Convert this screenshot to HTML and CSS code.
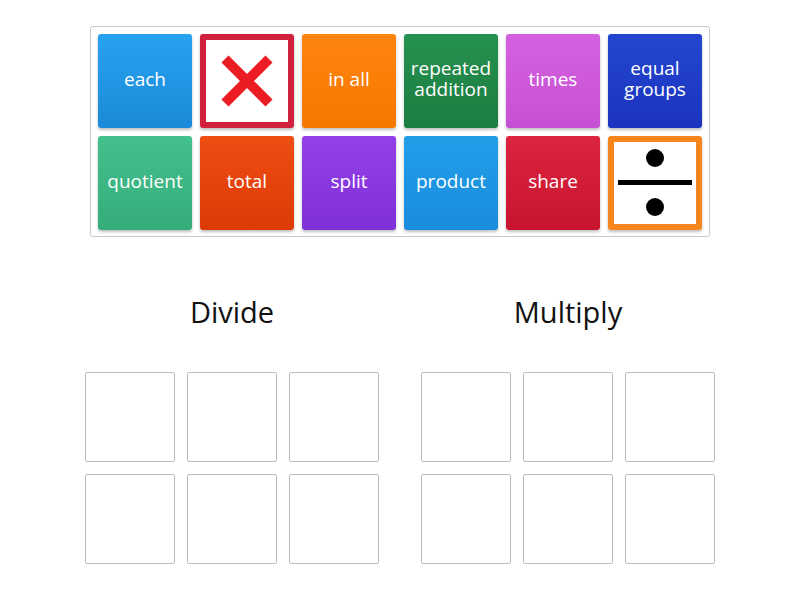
FILE: index.html
```html
<!DOCTYPE html>
<html>
<head>
<meta charset="utf-8">
<link rel="stylesheet" href="styles.css">
</head>
<body>
<div class="page">
  <div class="bank">
    <div class="tile blue">each</div>
    <div class="tile img red-frame">
      <svg width="54" height="54" viewBox="0 0 54 54"><path d="M5 5 L49 49 M49 5 L5 49" stroke="#ec1c24" stroke-width="10" stroke-linecap="butt"/></svg>
    </div>
    <div class="tile orange">in all</div>
    <div class="tile green">repeated addition</div>
    <div class="tile magenta">times</div>
    <div class="tile navy">equal groups</div>
    <div class="tile teal">quotient</div>
    <div class="tile redorange">total</div>
    <div class="tile purple">split</div>
    <div class="tile sky">product</div>
    <div class="tile crimson">share</div>
    <div class="tile img orange-frame">
      <svg width="78" height="80" viewBox="0 0 78 80"><circle cx="39" cy="15" r="9" fill="#000"/><rect x="2" y="37" width="74" height="5" fill="#000"/><circle cx="39" cy="64" r="9" fill="#000"/></svg>
    </div>
  </div>
  <div class="groups">
    <div class="group">
      <div class="title">Divide</div>
      <div class="slots">
        <div class="slot"></div><div class="slot"></div><div class="slot"></div>
        <div class="slot"></div><div class="slot"></div><div class="slot"></div>
      </div>
    </div>
    <div class="group">
      <div class="title">Multiply</div>
      <div class="slots">
        <div class="slot"></div><div class="slot"></div><div class="slot"></div>
        <div class="slot"></div><div class="slot"></div><div class="slot"></div>
      </div>
    </div>
  </div>
</div>
</body>
</html>
```
FILE: styles.css
```css
html, body { margin: 0; padding: 0; background: #fff; }
body { font-family: "Open Sans", "Noto Sans", sans-serif; }
.page { width: 800px; height: 600px; padding-top: 26px; box-sizing: border-box; }
.bank {
  margin-left: 90px;
  width: 620px; height: 211px; box-sizing: border-box;
  border: 1px solid #c8c8c8; border-radius: 3px;
  padding: 7px;
  display: grid;
  grid-template-columns: repeat(6, 94px);
  grid-template-rows: repeat(2, 94px);
  column-gap: 8px; row-gap: 8px;
}
.tile {
  border-radius: 3px;
  color: #fff;
  font-size: 19px;
  line-height: 21px;
  display: flex; align-items: center; justify-content: center;
  text-align: center;
  box-shadow: 0 2px 3px rgba(0,0,0,0.25);
  padding: 0 4px 4px;
  box-sizing: border-box;
}
.img { padding: 0; background: #fff; }
.red-frame { border: 6px solid #d1213c; }
.orange-frame { border: 6px solid #f7861c; }
.blue { background: linear-gradient(#28a2f0, #1b8ad8); }
.orange { background: linear-gradient(#ff8410, #f57800); }
.green { background: linear-gradient(#26914f, #1c7d42); }
.magenta { background: linear-gradient(#d462e0, #c650d3); }
.navy { background: linear-gradient(#2346d0, #1b34bf); }
.teal { background: linear-gradient(#43c08c, #35ad7b); }
.redorange { background: linear-gradient(#ef4d12, #dd3a06); }
.purple { background: linear-gradient(#9340e8, #8030d8); }
.sky { background: linear-gradient(#229ee9, #1a8ddc); }
.crimson { background: linear-gradient(#dc2440, #c8142f); }
.groups {
  display: flex; justify-content: center; gap: 42px;
  margin-top: 55px;
}
.group { width: 294px; display: flex; flex-direction: column; align-items: center; }
.title { font-size: 29px; line-height: 40px; color: #111; height: 40px; }
.slots {
  margin-top: 40px;
  display: grid;
  grid-template-columns: repeat(3, 90px);
  grid-template-rows: repeat(2, 90px);
  gap: 12px;
}
.slot { border: 1px solid #bdbdbd; border-radius: 2px; box-sizing: border-box; }
```
